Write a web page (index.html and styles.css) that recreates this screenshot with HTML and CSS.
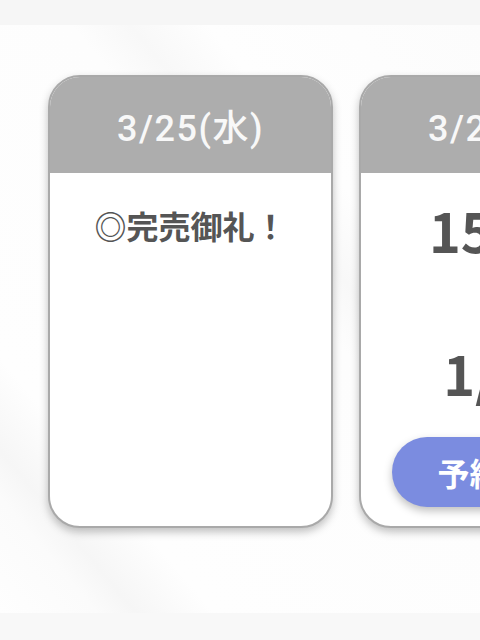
FILE: index.html
```html
<!DOCTYPE html>
<html lang="ja">
<head>
<meta charset="UTF-8">
<meta name="viewport" content="width=device-width, initial-scale=1.0">
<title>予約カレンダー</title>
<link rel="stylesheet" href="styles.css">
</head>
<body>

<div class="top-bar"></div>

<div class="stage">
  <div class="day-list">
    <div class="day-card">
      <div class="day-head">3/25(水)</div>
      <div class="day-body">
        <p class="sold-out">◎完売御礼！</p>
      </div>
    </div>

    <div class="day-card">
      <div class="day-head">3/26(木)</div>
      <div class="day-body">
        <p class="slot-time">15:00</p>
        <p class="slot-left">1/10</p>
        <button class="reserve">予約する</button>
      </div>
    </div>
  </div>
</div>

<div class="bottom-bar"></div>

</body>
</html>
```

FILE: styles.css
```css
body {
  margin: 0;
  background-color: #fdfdfd;
  font-family: "Noto Sans CJK JP", "Noto Sans", sans-serif;
  overflow: hidden;
}

.top-bar {
  height: 25px;
  background-color: #f6f6f6;
}

.bottom-bar {
  height: 27px;
  background-color: #f8f8f8;
}

/* Soft diagonal streaks behind the cards */
.stage {
  height: 588px;
  box-sizing: border-box;
  padding: 50px 0 0 48px;
  overflow: hidden;
  background:
    linear-gradient(50deg, #fefefe 0%, #fbfbfb 10%, #f6f6f6 14%, #fefefe 22%, #fdfdfd 58%, #f8f8f8 64%, #fefefe 72%, #fcfcfc 100%);
}

.day-list {
  display: flex;
  gap: 26px;
  width: max-content;
}

/* Card */
.day-card {
  width: 285px;
  height: 453px;
  box-sizing: border-box;
  border: 2px solid #a9a9a9;
  border-radius: 32px;
  background-color: #fff;
  overflow: hidden;
  box-shadow: 0 4px 8px rgba(0, 0, 0, 0.25);
}

.day-head {
  height: 96px;
  display: flex;
  align-items: center;
  justify-content: center;
  background-color: #adadad;
  color: #f8f8f8;
  font-family: Roboto, "Noto Sans CJK JP", sans-serif;
  font-size: 36px;
  font-weight: 500;
  letter-spacing: 1.5px;
}

.day-body {
  padding-top: 30px;
  text-align: center;
  color: #555;
}

.sold-out {
  margin: 0;
  font-size: 32px;
  font-weight: 700;
  line-height: 1.4;
}

.slot-time,
.slot-left {
  margin: 0;
  font-size: 54px;
  font-weight: 700;
  line-height: 1;
}

.slot-left {
  margin-top: 89px;
}

.reserve {
  display: block;
  width: 220px;
  height: 70px;
  margin: 37px auto 0;
  border: none;
  border-radius: 35px;
  background-color: #7b8ce0;
  color: #fff;
  font-family: inherit;
  font-size: 32px;
  font-weight: 700;
  box-shadow: 0 4px 8px rgba(0, 0, 0, 0.25);
}
```
